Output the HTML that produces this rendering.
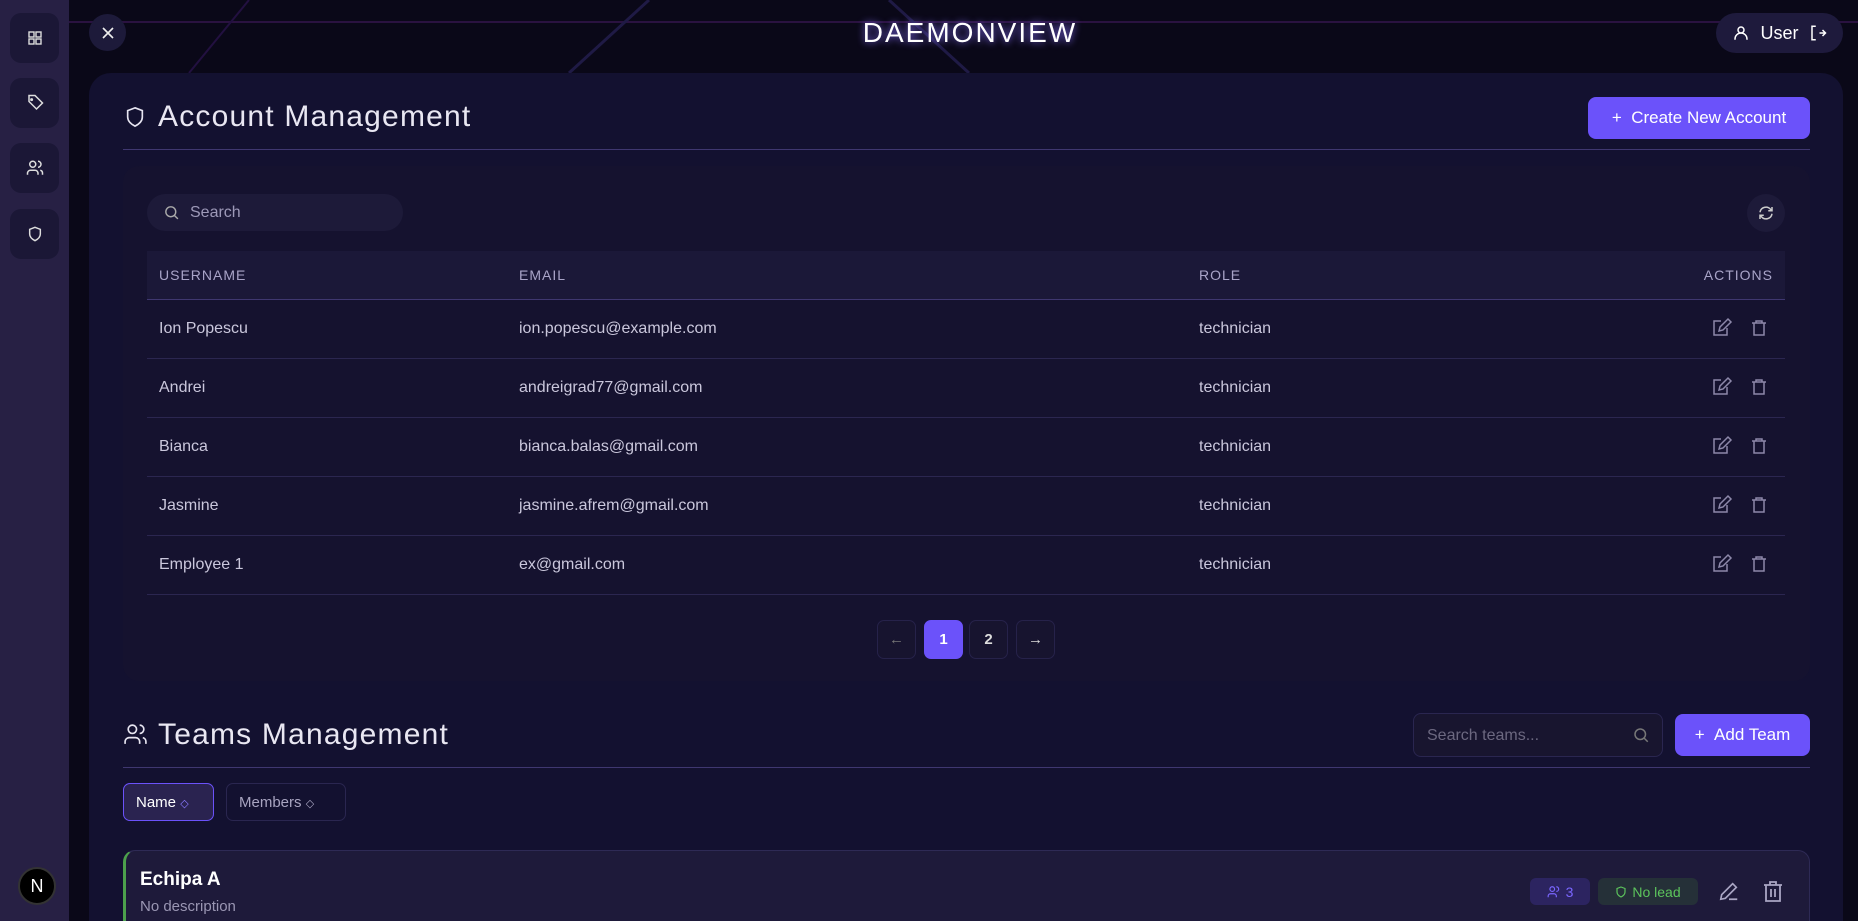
<!DOCTYPE html>
<html style="width:1858px;height:921px;overflow:hidden"><head><meta charset="utf-8">
<style>
*{box-sizing:border-box;margin:0;padding:0}
body{width:1858px;height:921px;overflow:hidden;background:#0a0818;font-family:"Liberation Sans",sans-serif;position:relative;color:#e6e4f0}
.abs{position:absolute}
.sb{left:0;top:0;width:69px;height:921px;background:#272044}
.sbb{left:10px;width:49px;height:50px;border-radius:11px;background:#1b1736;display:flex;align-items:center;justify-content:center}
svg{display:block}
.panel{left:89px;top:73px;width:1754px;height:848px;border-radius:22px 22px 0 0;background:#131130}
.h1{font-size:30px;color:#e9e7f2;letter-spacing:1.2px}
.line{height:1px;background:#3f3770}
.card{left:123px;top:166px;width:1687px;height:515px;border-radius:16px;background:#15122f}
.btn{background:#6b52fa;border-radius:8px;color:#fff;font-size:17px;display:flex;align-items:center;justify-content:center;gap:10px}
.th{left:147px;top:251px;width:1638px;height:49px;background:#1b1838;border-bottom:1px solid #3f3770;font-size:14px;color:#a9a4c8;letter-spacing:1px}
.th span,.row span{position:absolute;top:50%;transform:translateY(-50%)}
.row{left:147px;width:1638px;height:59px;border-bottom:1px solid #2b2650;font-size:16px;color:#cac7dc}
.pg{top:620px;width:39px;height:39px;border-radius:7px;border:1px solid #26224a;background:#17142f;display:flex;align-items:center;justify-content:center;font-size:15px;color:#ddd;font-weight:bold}
</style></head><body>
<svg class="abs" style="left:69px;top:0" width="1789" height="921">
<line x1="0" y1="22" x2="1789" y2="22" stroke="#2a1240" stroke-width="2"/>
<line x1="580" y1="0" x2="500" y2="73" stroke="#1f1a45" stroke-width="3"/>
<line x1="820" y1="0" x2="900" y2="73" stroke="#1f1a45" stroke-width="3"/>
<line x1="180" y1="0" x2="120" y2="73" stroke="#221040" stroke-width="2"/>
</svg>
<div class="abs sb"></div>
<div class="abs sbb" style="top:13px"><svg width="16" height="16" viewBox="0 0 16 16" fill="none" stroke="#ddd" stroke-width="1.4"><rect x="2" y="2" width="5" height="5"/><rect x="9" y="2" width="5" height="5"/><rect x="2" y="9" width="5" height="5"/><rect x="9" y="9" width="5" height="5"/></svg></div>
<div class="abs sbb" style="top:78px"><svg width="18" height="18" viewBox="0 0 24 24" fill="none" stroke="#ddd" stroke-width="2"><path d="M12 2H4v8l10 10 8-8z"/><circle cx="7.5" cy="7.5" r="1"/></svg></div>
<div class="abs sbb" style="top:143px"><svg width="18" height="18" viewBox="0 0 24 24" fill="none" stroke="#ddd" stroke-width="2"><circle cx="9" cy="7" r="4"/><path d="M2 21v-2a4 4 0 014-4h6a4 4 0 014 4v2M16 3a4 4 0 010 8M22 21v-2a4 4 0 00-3-4"/></svg></div>
<div class="abs sbb" style="top:209px"><svg width="16" height="16" viewBox="0 0 24 24" fill="none" stroke="#ddd" stroke-width="2.2"><path d="M12 2l8 3v7c0 5-4 8-8 10-4-2-8-5-8-10V5z"/></svg></div>
<div class="abs" style="left:18px;top:867px;width:38px;height:38px;border-radius:50%;background:#000;border:2px solid #333;color:#fff;font-size:18px;display:flex;align-items:center;justify-content:center">N</div>
<div class="abs" style="left:89px;top:14px;width:37px;height:37px;border-radius:50%;background:#1d1a3a;display:flex;align-items:center;justify-content:center"><svg width="14" height="14" viewBox="0 0 14 14" stroke="#eee" stroke-width="1.6"><path d="M2 2l10 10M12 2L2 12"/></svg></div>
<div class="abs" style="left:852px;top:17px;width:236px;text-align:center;font-size:28px;letter-spacing:2px;color:#fff;text-shadow:0 0 8px #8870ff">DAEMONVIEW</div>
<div class="abs" style="left:1716px;top:13px;width:127px;height:40px;border-radius:20px;background:#1e1a3c;display:flex;align-items:center;justify-content:center;gap:10px;font-size:18px;color:#fff">
<svg width="18" height="18" viewBox="0 0 24 24" fill="none" stroke="#fff" stroke-width="2"><circle cx="12" cy="8" r="4"/><path d="M4 21v-1a6 6 0 0116 0v1"/></svg>User
<svg width="18" height="18" viewBox="0 0 24 24" fill="none" stroke="#fff" stroke-width="2"><path d="M9 3H4v18h5M14 12h8M18 8l4 4-4 4"/></svg></div>

<div class="abs panel"></div>
<svg class="abs" style="left:124px;top:105px" width="22" height="24" viewBox="0 0 24 24" fill="none" stroke="#e6e4f0" stroke-width="1.8"><path d="M12 2l8 3v7c0 5-4 8-8 10-4-2-8-5-8-10V5z"/></svg>
<div class="abs h1" style="left:158px;top:100px">Account Management</div>
<div class="abs btn" style="left:1588px;top:97px;width:222px;height:42px">+ &nbsp;Create New Account</div>
<div class="abs line" style="left:123px;top:149px;width:1687px"></div>
<div class="abs card"></div>
<div class="abs" style="left:147px;top:194px;width:256px;height:37px;border-radius:19px;background:#1d1a39;display:flex;align-items:center;padding-left:16px;gap:10px;font-size:16px;color:#9d99b8"><svg width="17" height="17" viewBox="0 0 24 24" fill="none" stroke="#aaa" stroke-width="2"><circle cx="11" cy="11" r="7"/><path d="M16 16l5 5"/></svg>Search</div>
<div class="abs" style="left:1747px;top:194px;width:38px;height:38px;border-radius:50%;background:#1d1a39;display:flex;align-items:center;justify-content:center"><svg width="18" height="18" viewBox="0 0 24 24" fill="none" stroke="#ccc" stroke-width="2"><path d="M4 11a8 8 0 0114-4l2 2M20 4v5h-5M20 13a8 8 0 01-14 4l-2-2M4 20v-5h5"/></svg></div>
<div class="abs th"><span style="left:12px">USERNAME</span><span style="left:372px">EMAIL</span><span style="left:1052px">ROLE</span><span style="right:12px">ACTIONS</span></div>

<div class="abs row" style="top:300px"><span style="left:12px">Ion Popescu</span><span style="left:372px">ion.popescu@example.com</span><span style="left:1052px">technician</span></div>
<div class="abs row" style="top:359px"><span style="left:12px">Andrei</span><span style="left:372px">andreigrad77@gmail.com</span><span style="left:1052px">technician</span></div>
<div class="abs row" style="top:418px"><span style="left:12px">Bianca</span><span style="left:372px">bianca.balas@gmail.com</span><span style="left:1052px">technician</span></div>
<div class="abs row" style="top:477px"><span style="left:12px">Jasmine</span><span style="left:372px">jasmine.afrem@gmail.com</span><span style="left:1052px">technician</span></div>
<div class="abs row" style="top:536px"><span style="left:12px">Employee 1</span><span style="left:372px">ex@gmail.com</span><span style="left:1052px">technician</span></div>

<svg class="abs" style="left:1711px;top:300px" width="70" height="300">
<g fill="none" stroke="#8d88aa" stroke-width="1.5">
<g transform="translate(0,13)"><path d="M10 8H3v14h13v-7M8 18l1-4 8-8 3 3-8 8z"/><path d="M43 10v12h10V10M41 10h14M45 10v-2h6v2"/></g>
<g transform="translate(0,72)"><path d="M10 8H3v14h13v-7M8 18l1-4 8-8 3 3-8 8z"/><path d="M43 10v12h10V10M41 10h14M45 10v-2h6v2"/></g>
<g transform="translate(0,131)"><path d="M10 8H3v14h13v-7M8 18l1-4 8-8 3 3-8 8z"/><path d="M43 10v12h10V10M41 10h14M45 10v-2h6v2"/></g>
<g transform="translate(0,190)"><path d="M10 8H3v14h13v-7M8 18l1-4 8-8 3 3-8 8z"/><path d="M43 10v12h10V10M41 10h14M45 10v-2h6v2"/></g>
<g transform="translate(0,249)"><path d="M10 8H3v14h13v-7M8 18l1-4 8-8 3 3-8 8z"/><path d="M43 10v12h10V10M41 10h14M45 10v-2h6v2"/></g>
</g></svg>

<div class="abs pg" style="left:877px;color:#777">←</div>
<div class="abs pg" style="left:924px;background:#6b52fa;border-color:#6b52fa;color:#fff">1</div>
<div class="abs pg" style="left:969px">2</div>
<div class="abs pg" style="left:1016px">→</div>

<svg class="abs" style="left:123px;top:722px" width="25" height="25" viewBox="0 0 24 24" fill="none" stroke="#e6e4f0" stroke-width="1.6"><circle cx="9" cy="7" r="4"/><path d="M2 21v-2a4 4 0 014-4h6a4 4 0 014 4v2M16 3a4 4 0 010 8M22 21v-2a4 4 0 00-3-4"/></svg>
<div class="abs h1" style="left:158px;top:718px">Teams Management</div>
<div class="abs" style="left:1413px;top:713px;width:250px;height:44px;border-radius:8px;background:#18152f;border:1px solid #2a2650;font-size:16px;color:#6c6880;padding:13px 0 0 13px">Search teams...</div>
<svg class="abs" style="left:1632px;top:726px" width="18" height="18" viewBox="0 0 24 24" fill="none" stroke="#777" stroke-width="2"><circle cx="11" cy="11" r="7"/><path d="M16 16l5 5"/></svg>
<div class="abs btn" style="left:1675px;top:714px;width:135px;height:42px">+ &nbsp;Add Team</div>
<div class="abs line" style="left:123px;top:767px;width:1687px"></div>
<div class="abs" style="left:123px;top:783px;width:91px;height:38px;border-radius:7px;background:#2a2350;border:1px solid #6b52fa;font-size:15px;color:#fff;padding:10px 0 0 12px">Name <span style="color:#8a7aff;font-size:11px">◇</span></div>
<div class="abs" style="left:226px;top:783px;width:120px;height:38px;border-radius:7px;border:1px solid #2a2650;font-size:15px;color:#a8a4c0;padding:10px 0 0 12px">Members <span style="font-size:11px">◇</span></div>

<div class="abs" style="left:123px;top:850px;width:1687px;height:71px;border-radius:12px 12px 0 0;background:#1e1a3a;border:1px solid #2e2a55;border-bottom:none;border-left:3px solid #4ca04c"></div>
<div class="abs" style="left:140px;top:869px;font-size:19px;font-weight:bold;color:#fff">Echipa A</div>
<div class="abs" style="left:140px;top:898px;font-size:15px;color:#9a96b3">No description</div>
<div class="abs" style="left:1530px;top:878px;width:60px;height:27px;border-radius:6px;background:#2c2460;color:#7a66ff;font-size:14px;display:flex;align-items:center;justify-content:center;gap:5px"><svg width="14" height="14" viewBox="0 0 24 24" fill="none" stroke="#7a66ff" stroke-width="2"><circle cx="9" cy="7" r="4"/><path d="M2 21v-2a4 4 0 014-4h6a4 4 0 014 4v2M16 3a4 4 0 010 8"/></svg>3</div>
<div class="abs" style="left:1598px;top:878px;width:100px;height:27px;border-radius:6px;background:#253038;color:#5cc45c;font-size:14px;display:flex;align-items:center;justify-content:center;gap:5px"><svg width="12" height="14" viewBox="0 0 24 24" fill="none" stroke="#5cc45c" stroke-width="2.4"><path d="M12 2l8 3v7c0 5-4 8-8 10-4-2-8-5-8-10V5z"/></svg>No lead</div>
<svg class="abs" style="left:1718px;top:880px" width="22" height="22" viewBox="0 0 24 24" fill="none" stroke="#aaa6c4" stroke-width="1.8"><path d="M3 21l1-5L16 4l4 4L8 20zM12 21h9"/></svg>
<svg class="abs" style="left:1763px;top:880px" width="20" height="22" viewBox="0 0 20 22" fill="none" stroke="#aaa6c4" stroke-width="1.8"><path d="M1 5h18M7 5V2h6v3M3 5v16h14V5M8 9v8M12 9v8"/></svg>
</body></html>
